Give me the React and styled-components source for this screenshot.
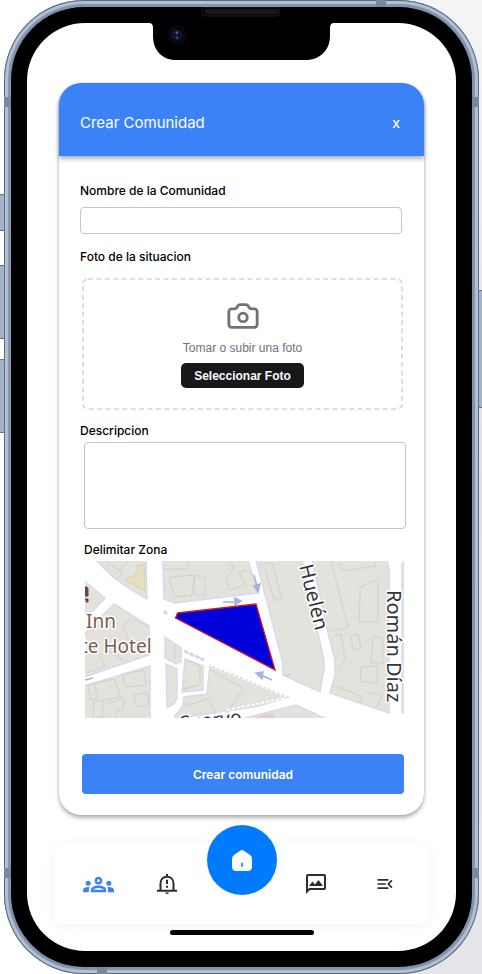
import React from "react";
import styled, { createGlobalStyle } from "styled-components";
import { Camera } from "lucide-react";
import { MdOutlineGroups, MdOutlineMms, MdMenuOpen } from "react-icons/md";

const GlobalStyle = createGlobalStyle`
  *, *::before, *::after { box-sizing: border-box; }
  body {
    margin: 0;
    background: linear-gradient(90deg, #ffffff 0%, #ffffff 40%, rgba(255, 255, 255, 0) 90%),
      linear-gradient(180deg, #f5f5f6 0%, #dfdfe4 50%, #e5e5ea 100%);
    font-family: Inter, "Liberation Sans", sans-serif;
    color: #000;
  }
  button, input, textarea { font: inherit; }
`;

const Page = styled.div`
  display: flex;
  justify-content: center;
  min-height: 100vh;
  padding: 0 3px 1px 4px;
  overflow: hidden;
`;

const Frame = styled.div`
  position: relative;
  display: flex;
  width: 100%;
  max-width: 475px;
  padding: 7px;
  border-radius: 80px;
  background: #8494ab;
  box-shadow: inset 0 0 0 1px #5d6979, inset 0 0 1px 4px #b3c1d5, inset 0 0 1px 6px #8192aa;
`;

const SideButton = styled.span`
  position: absolute;
  top: ${(p) => p.$top}px;
  ${(p) => p.$side}: -5px;
  width: 6px;
  height: ${(p) => p.$length}px;
  border: 1px solid #627083;
  border-radius: 2px;
  background: #a5b3c6;
`;

const Antenna = styled.span`
  position: absolute;
  ${(p) => p.$edge}: 0;
  ${(p) => p.$from}: ${(p) => p.$at}px;
  width: ${(p) => (p.$from === "left" || p.$from === "right" ? 10 : 7)}px;
  height: ${(p) => (p.$from === "left" || p.$from === "right" ? 7 : 10)}px;
  background: #77899d;
`;

const Bezel = styled.div`
  display: flex;
  flex: 1;
  min-width: 0;
  padding: 16px;
  border-radius: 73px;
  background: #000;
`;

const Screen = styled.div`
  display: flex;
  flex: 1;
  flex-direction: column;
  min-width: 0;
  border-radius: 58px;
  background: #fff;
`;

const NotchBar = styled.div`
  display: flex;
  justify-content: center;
  height: 60px;
  padding-right: 2px;
`;

const NotchArt = styled.svg`
  display: block;
  width: 186px;
  height: 53px;
  margin-top: -16px;
`;

const Card = styled.main`
  margin: 0 32px;
  border-radius: 22px;
  background: #fff;
  box-shadow: 0 3px 4px rgba(0, 0, 0, 0.3), 0 0 2px rgba(0, 0, 0, 0.15);
`;

const CardHeader = styled.header`
  display: flex;
  align-items: center;
  justify-content: space-between;
  height: 73px;
  padding: 6px 24px 0 21px;
  border-radius: 22px 22px 0 0;
  background: #3b82f6;
  box-shadow: 0 3px 4px rgba(0, 0, 0, 0.3);
  color: #fff;
`;

const Title = styled.h1`
  margin: 0;
  font-size: 15px;
  font-weight: 400;
  line-height: 20px;
`;

const CloseButton = styled.button`
  padding: 0;
  border: 0;
  background: none;
  color: inherit;
  font-size: 14px;
  font-weight: 500;
  line-height: 20px;
  cursor: pointer;
`;

const Form = styled.form`
  display: flex;
  flex-direction: column;
  padding: 27px 20px 21px 21px;
`;

const Label = styled.label`
  margin-left: ${(p) => (p.$inset ? 4 : 0)}px;
  font-size: 12px;
  font-weight: 500;
  line-height: 16px;
`;

const TextInput = styled.input`
  width: calc(100% - 2px);
  height: 27px;
  margin: 8px 0 15px;
  padding: 0 8px;
  border: 1px solid #c4c4c4;
  border-radius: 4px;
  background: #fff;
  font-size: 12px;
`;

const TextArea = styled.textarea`
  height: 87px;
  margin: 3px -2px 13px 4px;
  padding: 8px;
  border: 1px solid #c4c4c4;
  border-radius: 4px;
  background: #fff;
  font-size: 12px;
  resize: none;
`;

const PhotoBox = styled.div`
  position: relative;
  display: flex;
  flex-direction: column;
  align-items: center;
  height: 132px;
  margin: 13px 1px 13px 2px;
  padding-top: 21px;
  color: #71717a;
  font-family: "Liberation Sans", sans-serif;
  font-size: 12px;
  line-height: 16px;
`;

const DashedOutline = styled.svg`
  position: absolute;
  inset: 0;
  width: 100%;
  height: 100%;
  pointer-events: none;
`;

const PhotoHint = styled.p`
  margin: 7px 0;
`;

const PhotoButton = styled.button`
  height: 25px;
  padding: 0 13px;
  border: 0;
  border-radius: 5px;
  background: #18181b;
  color: #fafafa;
  font-weight: 700;
  cursor: pointer;
`;

const MapArt = styled.svg`
  display: block;
  height: 157px;
  margin: 3px 0 36px 5px;
`;

const SubmitButton = styled.button`
  height: 40px;
  margin-left: 2px;
  border: 0;
  border-radius: 4px;
  background: #3b82f6;
  color: #fff;
  font-size: 12px;
  font-weight: 600;
  cursor: pointer;
`;

const NavBar = styled.nav`
  display: grid;
  grid-template-columns: 1fr 1fr 80px 1fr 1fr;
  align-items: center;
  justify-items: center;
  height: 80px;
  margin: 29px 27px 0;
  padding: 0 10px;
  border-radius: 10px;
  background: #fff;
  box-shadow: 0 2px 14px rgba(0, 0, 0, 0.05);
`;

const NavButton = styled.button`
  display: flex;
  padding: 0;
  border: 0;
  background: none;
  color: ${(p) => (p.$active ? "#3b82f6" : "#2d2d2d")};
  cursor: pointer;
`;

const HomeButton = styled.button`
  display: grid;
  place-items: center;
  width: 70px;
  height: 70px;
  margin: -48px 0 0;
  padding: 0;
  border: 0;
  border-radius: 50%;
  background: #007aff;
  cursor: pointer;
`;

const HomeIndicator = styled.div`
  width: 144px;
  height: 5px;
  margin: 6px auto 16px;
  border-radius: 3px;
  background: #000;
`;

function Notch() {
  return (
    <NotchBar>
      <NotchArt viewBox="0 1 186 53" aria-hidden="true">
        <path d="M0 17H1Q5 17 5 22V30C5 44 14 54 28 54H158C172 54 182 44 182 30V22Q182 17 186 17V1H0Z" fill="#000" />
        <rect x="54" y="1" width="78" height="9" rx="4" fill="#050505" stroke="#1c1c1c" />
        <rect x="57" y="3" width="73" height="5" rx="2" fill="#191919" />
        <circle cx="29" cy="29" r="10" fill="#0a070d" />
        <circle cx="29" cy="29" r="5" fill="#17163e" />
        <circle cx="29" cy="29" r="3" fill="#0c0b28" />
        <circle cx="29" cy="27" r="1.4" fill="#544f9c" />
        <circle cx="29" cy="31.5" r="1.3" fill="#155878" />
      </NotchArt>
    </NotchBar>
  );
}

function BellIcon() {
  return (
    <svg width="20" height="20" viewBox="0 0 20 20" fill="none" stroke="currentColor" strokeWidth="2" aria-hidden="true">
      <path d="M3.5 16.5V9.5C3.5 5.5 6 2.8 10 2.8S16.5 5.5 16.5 9.5V16.5" />
      <path d="M0 16.8H20M10 0V3M10 5.7V10M10 11.7V13.7" />
      <path d="M8 18.5H12Q11.5 20 10 20T8 18.5Z" fill="currentColor" stroke="none" />
    </svg>
  );
}

function HomeIcon() {
  return (
    <svg width="20" height="21" viewBox="0 0 20 21" aria-hidden="true">
      <path d="M10 0Q11 0 12.5 1.2L17.5 4.5Q20 6.2 20 9V16.5Q20 21 15.5 21H4.5Q0 21 0 16.5V9Q0 6.2 2.5 4.5L7.5 1.2Q9 0 10 0Z" fill="#fff" />
      <path d="M10 12.7V16.7" stroke="#007aff" strokeWidth="1.6" />
    </svg>
  );
}

function ZoneMap() {
  return (
    <MapArt role="img" aria-label="Mapa de la zona" viewBox="0 0 319 157" preserveAspectRatio="xMidYMid slice">
      <rect width="319" height="157" fill="#fff" />
      <g fill="#e3e2dd" stroke="#d7daea" strokeWidth="1.5">
        <path d="M11-1H61L62 38Q45 29 29 17Z" />
        <path d="M-1 20L20 37L6 52L-1 56Z" />
        <path d="M29 43L64 65V94L-1 116V73Z" />
        <path d="M-1 125L65 105V158H-1Z" />
        <path d="M78-1H163L173 32L90 42L79 38Z" />
        <path d="M80 76L96 87V101L91 103L80 97Z" />
        <path d="M81 103L92 108V137Q89 145 82 146Z" />
        <path d="M100 98L118 105V129L97 131Z" />
        <path d="M125 104L203 136L174 145L122 153L90 158V154Q99 148 99 136L122 133Z" />
        <path d="M171-1H217L233 72L239 99V108L235 131L198 114V103Z" />
        <path d="M227-1H302L304 8V152L245 132L250 114V99L243 72Z" />
        <path d="M318 1L320 0V153L317 151V4Z" />
        <path d="M157 158L211 144L242 158Z" />
      </g>
      <path d="M51 5L59 3L60 30L40 19L45 15L49 17L52 9Z" fill="#e6dfbd" stroke="#dad2b1" />
      <path d="M170 156L188 151L191 158H169Z" fill="#eacbd0" />
      <g fill="none" stroke="#d2d0cb">
        <path d="M20 0L38 12L31 19M43 0L31 13M80 8H103V0M85 16L109 14L107 34L90 36L84 17ZM110 15H120V34H109ZM144 0L149 7L141 18L144 29L160 24L154 11L162 9" />
        <path d="M48 58L63 66M44 58L38 68L43 77L63 83M0 81L13 91L20 105L2 112M20 88L34 96L38 101M54 89L64 94M3 124L9 122L13 137L6 139ZM10 122L29 118L36 136L20 139M38 113L59 109L61 124L40 126ZM49 134L62 131L64 144L52 146ZM9 141L18 139V156H8ZM23 143L39 137L38 148L31 150V157M90 84V98M102 99L115 105V124L98 128M99 145L124 138L131 154M124 108L158 127L139 157" />
        <path d="M175 4L187 2L193 24L197 39H189L180 7M246 0L263 66L246 70M254 2L258 10L291 5L288 0M275 38V26L293 18V61H274ZM249 75L256 73L260 98L254 110M266 75L273 73L276 87L268 89ZM288 75L298 77V102H286ZM276 106L292 105V123L275 120ZM249 124L277 136L274 142M280 130L297 134L292 146M200 115L206 113" />
      </g>
      <path d="M125 104L203 136M142 149L200 137" stroke="#fff" fill="none" strokeWidth="2" strokeDasharray="3 2" />
      <path d="M99 90L119 99M79 50L82 53" stroke="#d4d6e6" strokeWidth="3" strokeDasharray="5 1" />
      <g fill="#a4b3dc" stroke="#a4b3dc" strokeWidth="1.5">
        <path d="M138 41H150M150 37L156 40L150 44Z" />
        <path d="M169 14L172 25M169 25L175 23L173 31Z" />
        <path d="M187 119L176 114M178 111L171 112L177 118Z" />
        <path d="M0 119L8 117" />
      </g>
      <path d="M92.5 52L171 43L190 109L90.5 57Z" fill="#0000d8" stroke="#dc161c" strokeWidth="1.3" />
      <path d="M0 26H2L3 28V35H0M0 38H3V41H1" fill="#6b4636" stroke="#6b4636" />
      <g fontFamily='"Noto Sans", sans-serif' fontSize="19" stroke="#fff" strokeWidth="3" paintOrder="stroke" strokeLinejoin="round">
        <text x="1" y="67" fill="#795c4b">Inn</text>
        <text x="-4" y="92" fill="#795c4b">te Hotel</text>
        <text transform="translate(214 5) rotate(76)" fill="#363636" fontSize="20">Huelén</text>
        <text transform="translate(302 29) rotate(90)" fill="#363636" fontSize="20">Román Díaz</text>
        <text transform="translate(94 169) rotate(-6)" fill="#363636">Cuervo</text>
      </g>
    </MapArt>
  );
}

export default function App() {
  return (
    <>
      <GlobalStyle />
      <Page>
        <Frame>
          <SideButton $side="left" $top={194} $length={37} />
          <SideButton $side="left" $top={265} $length={74} />
          <SideButton $side="left" $top={359} $length={74} />
          <SideButton $side="right" $top={290} $length={118} />
          <Antenna $edge="left" $from="top" $at={97} />
          <Antenna $edge="right" $from="top" $at={97} />
          <Antenna $edge="left" $from="bottom" $at={96} />
          <Antenna $edge="right" $from="bottom" $at={96} />
          <Antenna $edge="top" $from="right" $at={93} />
          <Antenna $edge="bottom" $from="left" $at={93} />
          <Bezel>
            <Screen>
              <Notch />
              <Card>
                <CardHeader>
                  <Title>Crear Comunidad</Title>
                  <CloseButton type="button" aria-label="Cerrar">x</CloseButton>
                </CardHeader>
                <Form onSubmit={(e) => e.preventDefault()}>
                  <Label htmlFor="nombre">Nombre de la Comunidad</Label>
                  <TextInput id="nombre" type="text" />
                  <Label htmlFor="foto">Foto de la situacion</Label>
                  <PhotoBox>
                    <DashedOutline aria-hidden="true">
                      <rect x="1" y="1" width="calc(100% - 2px)" height="calc(100% - 2px)" rx="5" fill="none" stroke="#d4d4dc" strokeWidth="1.6" strokeDasharray="5 3.4" />
                    </DashedOutline>
                    <Camera size={34} strokeWidth={2} aria-hidden="true" />
                    <PhotoHint>Tomar o subir una foto</PhotoHint>
                    <PhotoButton id="foto" type="button">Seleccionar Foto</PhotoButton>
                  </PhotoBox>
                  <Label htmlFor="descripcion">Descripcion</Label>
                  <TextArea id="descripcion" />
                  <Label as="span" $inset>Delimitar Zona</Label>
                  <ZoneMap />
                  <SubmitButton type="submit">Crear comunidad</SubmitButton>
                </Form>
              </Card>
              <NavBar aria-label="Principal">
                <NavButton type="button" aria-label="Comunidades" $active><MdOutlineGroups size={31} /></NavButton>
                <NavButton type="button" aria-label="Alertas"><BellIcon /></NavButton>
                <HomeButton type="button" aria-label="Inicio"><HomeIcon /></HomeButton>
                <NavButton type="button" aria-label="Mensajes"><MdOutlineMms size={24} /></NavButton>
                <NavButton type="button" aria-label="Menú"><MdMenuOpen size={20} /></NavButton>
              </NavBar>
              <HomeIndicator />
            </Screen>
          </Bezel>
        </Frame>
      </Page>
    </>
  );
}
